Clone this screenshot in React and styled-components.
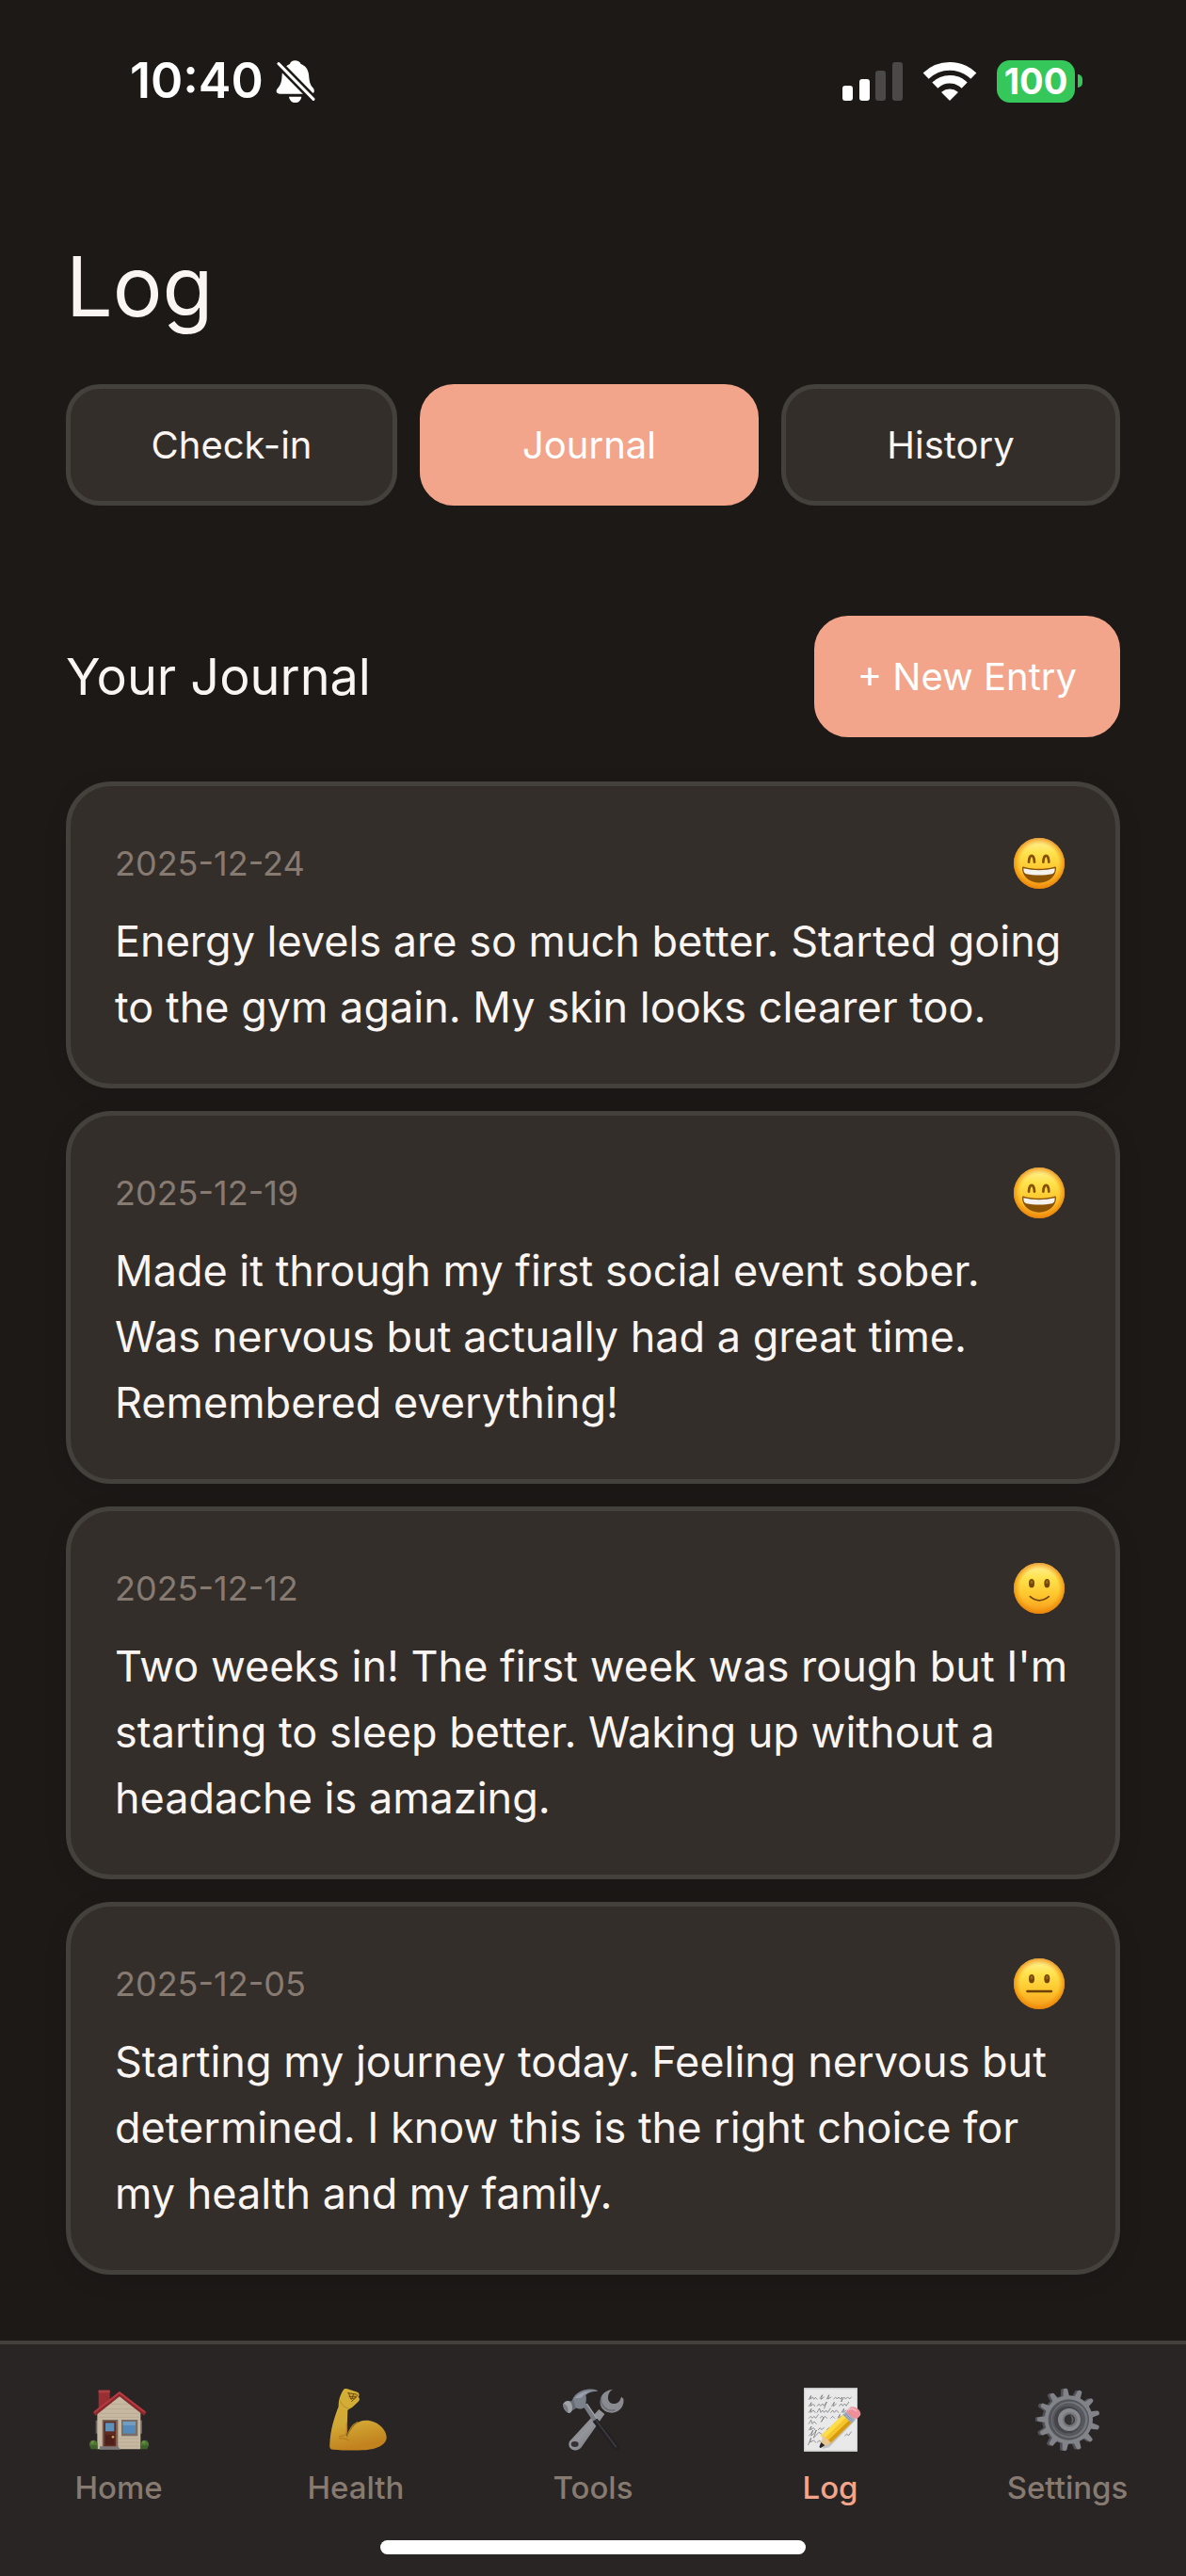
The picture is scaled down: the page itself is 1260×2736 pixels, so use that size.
import React, { useState } from "react";
import styled, { createGlobalStyle, ThemeProvider } from "styled-components";

const theme = {
  bg: "#1c1917",
  card: "#332e2a",
  border: "#44403c",
  nav: "#292524",
  accent: "#f2a58a",
  text_primary: "#faf5f2",
  text_secondary: "#877b71",
};

const GlobalStyle = createGlobalStyle`
  * {
    box-sizing: border-box;
  }
  body {
    margin: 0;
    background: #1c1917;
    font-family: Inter, "Liberation Sans", sans-serif;
  }
  button {
    font-family: inherit;
    cursor: pointer;
  }
`;

const Page = styled.div`
  min-height: 100vh;
  display: flex;
  flex-direction: column;
  background: ${({ theme }) => theme.bg};
  color: ${({ theme }) => theme.text_primary};
`;

const StatusBar = styled.header`
  height: 172px;
  padding: 0 110px 0 138px;
  display: flex;
  align-items: center;
  justify-content: space-between;
  color: #fff;
`;

const StatusGroup = styled.div`
  display: flex;
  align-items: center;
  gap: ${({ $gap }) => $gap}px;
`;

const Time = styled.span`
  font-size: 52px;
  line-height: 60px;
  font-weight: 600;
`;

const Battery = styled.div`
  display: flex;
  align-items: center;
  gap: 3px;
`;

const BatteryLevel = styled.div`
  width: 83px;
  height: 45px;
  border-radius: 14px;
  display: flex;
  align-items: center;
  justify-content: center;
  background: #35c759;
  font-size: 38px;
  line-height: 45px;
  font-weight: 700;
`;

const BatteryTip = styled.div`
  width: 5px;
  height: 14px;
  border-radius: 0 7px 7px 0;
  background: #35c759;
`;

const Main = styled.main`
  flex: 1;
  padding: 76px 70px 68px;
  display: flex;
  flex-direction: column;
`;

const Title = styled.h1`
  margin: 0 0 48px;
  font-size: 88px;
  line-height: 112px;
  font-weight: 400;
`;

const Tabs = styled.div`
  display: grid;
  grid-template-columns: 352fr 360fr 360fr;
  gap: 24px;
  margin-bottom: 117px;
`;

const Button = styled.button`
  height: 129px;
  padding: 0 41px;
  font-size: 40px;
  line-height: 48px;
  font-weight: 400;
  border-radius: 36px;
  border: 5px solid
    ${({ theme, $filled }) => ($filled ? theme.accent : theme.border)};
  background: ${({ theme, $filled }) => ($filled ? theme.accent : theme.card)};
  color: ${({ theme, $filled }) => ($filled ? "#fff" : theme.text_primary)};
`;

const SectionHeader = styled.div`
  display: flex;
  align-items: center;
  justify-content: space-between;
  margin-bottom: 47px;
`;

const SectionTitle = styled.h2`
  margin: 0;
  font-size: 54px;
  line-height: 72px;
  font-weight: 400;
`;

const EntryList = styled.div`
  display: flex;
  flex-direction: column;
  gap: 24px;
`;

const EntryCard = styled.article`
  padding: 48px 48px 46px 47px;
  border: 5px solid ${({ theme }) => theme.border};
  border-radius: 48px;
  background: ${({ theme }) => theme.card};
  box-shadow: 0 6px 24px rgba(0, 0, 0, 0.1);
`;

const EntryTop = styled.div`
  height: 68px;
  margin-bottom: 14px;
  display: flex;
  align-items: center;
  justify-content: space-between;
`;

const EntryDate = styled.time`
  font-size: 36px;
  line-height: 44px;
  color: ${({ theme }) => theme.text_secondary};
`;

const EntryText = styled.p`
  margin: 0;
  font-size: 45px;
  line-height: 70px;
`;

const BottomBar = styled.footer`
  padding: 46px 0 23px;
  display: flex;
  flex-direction: column;
  align-items: center;
  gap: 36px;
  border-top: 4px solid ${({ theme }) => theme.border};
  background: ${({ theme }) => theme.nav};
`;

const Nav = styled.nav`
  width: 100%;
  display: grid;
  grid-template-columns: repeat(5, 1fr);
`;

const NavItem = styled.a`
  display: flex;
  flex-direction: column;
  align-items: center;
  gap: 18px;
  text-decoration: none;
  font-size: 33px;
  line-height: 40px;
  font-weight: 500;
  color: ${({ theme, $active }) =>
    $active ? theme.accent : theme.text_secondary};
  svg {
    opacity: ${({ $active }) => ($active ? 1 : 0.8)};
  }
`;

const HomeIndicator = styled.div`
  width: 452px;
  height: 15px;
  border-radius: 8px;
  background: #fff;
`;

const BellOff = () => (
  <svg width="42" height="46" viewBox="0 0 126 138" aria-hidden="true">
    <path
      d="M61 4c9 0 16 4 19 11 14 5 23 17 25 33 2 20 3 32 13 42 8 9 5 20-6 20H12C1 110-1 100 6 92c12-12 13-26 14-44 2-16 11-28 25-33 2-7 8-11 16-11z"
      fill="#fff"
    />
    <path d="M42 119h40c-2 12-10 19-20 19s-18-7-20-19z" fill="#fff" />
    <path d="M2 7l126 128" stroke="#1c1917" strokeWidth="25" />
    <path
      d="M9 14l111 113"
      stroke="#fff"
      strokeWidth="9"
      strokeLinecap="round"
    />
  </svg>
);

const Signal = () => (
  <svg width="64" height="41" viewBox="0 0 64 41" aria-hidden="true">
    <rect x="0" y="25" width="11" height="16" rx="3" fill="#fff" />
    <rect x="18" y="18" width="11" height="23" rx="3" fill="#fff" />
    <rect x="35" y="9" width="11" height="32" rx="3" fill="#4b4947" />
    <rect x="53" y="0" width="11" height="41" rx="3" fill="#4b4947" />
  </svg>
);

const Wifi = () => (
  <svg width="60" height="44" viewBox="0 0 180 132" aria-hidden="true">
    <g fill="none" stroke="#fff" strokeWidth="26">
      <path d="M14 50A109 109 0 0 1 166 50" />
      <path d="M43 80A67 67 0 0 1 137 80" />
    </g>
    <path
      d="M90 126L66 102A37 37 0 0 1 114 102Z"
      fill="#fff"
      stroke="#fff"
      strokeWidth="4"
      strokeLinejoin="round"
    />
  </svg>
);

const Face = ({ mood }) => (
  <svg width="66" height="66" viewBox="0 0 198 198" role="img" aria-label={mood}>
    <defs>
      <linearGradient id={`skin-${mood}`} x1="0" y1="0" x2="0" y2="1">
        <stop offset="0" stopColor="#fff3a0" />
        <stop offset="0.3" stopColor="#ffe24c" />
        <stop offset="0.65" stopColor="#fec42c" />
        <stop offset="1" stopColor="#f5981b" />
      </linearGradient>
      <radialGradient id={`edge-${mood}`}>
        <stop offset="0.75" stopColor="#f08a00" stopOpacity="0" />
        <stop offset="1" stopColor="#e87d05" stopOpacity="0.75" />
      </radialGradient>
    </defs>
    <circle cx="99" cy="99" r="81" fill={`url(#skin-${mood})`} />
    <circle cx="99" cy="99" r="81" fill={`url(#edge-${mood})`} />
    {mood === "great" ? (
      <>
        <g fill="none" stroke="#855000" strokeWidth="8" strokeLinecap="round">
          <path d="M66 95C67 68 83 68 84 95" />
          <path d="M112 95C113 68 129 68 130 95" />
        </g>
        <path
          d="M45 112c-2 27 22 49 54 49s56-22 54-49c-1-3-4-3-6-2-30 8-66 8-96 0-3-1-5 0-6 2z"
          fill="#8b5305"
        />
        <path
          d="M49 115c32 8 68 8 100 0 0 11-3 16-9 18-24 5-58 5-82 0-6-2-9-7-9-18z"
          fill="#f4f2ef"
        />
      </>
    ) : (
      <>
        <g fill="#744707">
          <ellipse cx="75" cy="83" rx="9" ry="14" />
          <ellipse cx="124" cy="83" rx="9" ry="14" />
        </g>
        <g fill="#9c6a16">
          <ellipse cx="75" cy="79" rx="4" ry="6" />
          <ellipse cx="124" cy="79" rx="4" ry="6" />
        </g>
        <path
          d={mood === "good" ? "M70 125Q99 150 130 125" : "M61 123H138"}
          fill="none"
          stroke="#6d4209"
          strokeWidth={mood === "good" ? 5 : 7}
          strokeLinecap="round"
        />
      </>
    )}
  </svg>
);

const HomeIcon = () => (
  <svg width="68" height="68" viewBox="0 0 204 204" aria-hidden="true">
    <path d="M38 8h36v30L38 66z" fill="#b53237" />
    <path d="M38 8h36v8H38z" fill="#cf474b" />
    <path d="M29 104h8v42h-8zM170 104h7v42h-7z" fill="#777272" />
    <path d="M34 74L105 20l67 54v122H34z" fill="#efdfc1" />
    <path
      d="M72 52h66M54 68h100M38 82h130M38 94h130M102 162h66M102 174h66M102 186h66"
      stroke="#d5c5a7"
      strokeWidth="2"
    />
    <path
      d="M24 84L105 20l82 64"
      fill="none"
      stroke="#a02a31"
      strokeWidth="13"
    />
    <path
      d="M25 78L105 16l81 62"
      fill="none"
      stroke="#dc4048"
      strokeWidth="6"
    />
    <path d="M50 102h50v88H50z" fill="#8b7567" />
    <path d="M55 107h38v82H55z" fill="#6f2b20" />
    <path d="M60 112h28v27H60z" fill="#6caee0" />
    <path d="M60 150h28v32H60z" fill="#592018" />
    <circle cx="84" cy="157" r="4" fill="#f0c36a" />
    <path d="M111 102h52v52h-52z" fill="#8d8178" />
    <path d="M116 108h40v38h-40z" fill="#5fa4df" />
    <path d="M116 108h40v12h-40z" fill="#83bbe8" />
    <path d="M42 187h58l8 10H42z" fill="#8f8c8b" />
    <circle cx="22" cy="180" r="13" fill="#568a32" />
    <circle cx="185" cy="180" r="13" fill="#568a32" />
    <path d="M9 184h26v12H14zM172 184h26l-5 12h-21z" fill="#42712c" />
    <circle cx="19" cy="174" r="5" fill="#76a64c" />
    <circle cx="182" cy="174" r="5" fill="#76a64c" />
  </svg>
);

const HealthIcon = () => (
  <svg width="68" height="68" viewBox="0 0 204 204" aria-hidden="true">
    <defs>
      <linearGradient id="arm" x1="0" y1="0" x2="0.2" y2="1">
        <stop offset="0" stopColor="#ffd43a" />
        <stop offset="0.6" stopColor="#fcc93a" />
        <stop offset="1" stopColor="#e99a1d" />
      </linearGradient>
    </defs>
    <path
      d="M63 6c4-5 12-3 17-1l27 9c7 3 7 11 3 15 5 5 5 11 0 15L91 62c-5 4-11 5-15 10-1 31-2 56-3 85 13-30 32-53 62-53 36 0 65 29 65 54 0 25-34 39-76 41-35 2-68 0-96-2-9-1-10-7-9-17 2-47 14-83 28-120-1-21 7-41 16-54z"
      fill="url(#arm)"
    />
    <path
      d="M50 155c18-2 26 2 23-40M74 158c5-20 17-40 34-48M50 161c13 0 22 2 31 7"
      fill="none"
      stroke="#d7931f"
      strokeWidth="4"
      strokeLinecap="round"
    />
    <path
      d="M77 17l26 4c5 1 5 7 0 7H81M80 18l6 18 15-4M94 22l-5 14M104 30l-15 13"
      fill="none"
      stroke="#825008"
      strokeWidth="3"
      strokeLinecap="round"
    />
    <path
      d="M53 42c4 14 13 20 25 24"
      fill="none"
      stroke="#dda02a"
      strokeWidth="3"
    />
  </svg>
);

const ToolsIcon = () => (
  <svg width="68" height="68" viewBox="0 0 204 204" aria-hidden="true">
    <defs>
      <linearGradient id="steel" x1="0" y1="0" x2="1" y2="1">
        <stop offset="0" stopColor="#8b9099" />
        <stop offset="0.5" stopColor="#aeb1b8" />
        <stop offset="1" stopColor="#74767e" />
      </linearGradient>
    </defs>
    <path
      d="M121 69l18 15-74 106c-7 10-23 13-33 4-10-8-9-20 0-28z"
      fill="url(#steel)"
    />
    <path
      d="M165 6c-9 4-14 12-15 24-1 14 9 22 22 21 11-2 17-10 20-22l7 6c4 24-13 44-36 45-24 1-41-17-38-39 2-20 18-34 40-35z"
      fill="#a2a5ad"
    />
    <path
      d="M128 30c-4 26 17 48 44 41"
      fill="none"
      stroke="#777b84"
      strokeWidth="4"
    />
    <ellipse cx="44" cy="180" rx="12" ry="9" fill="#38343a" />
    <path d="M68 55l15-5 34 51-13 9z" fill="#8d929b" />
    <path d="M82 51l34 50" stroke="#c2c5cc" strokeWidth="4" />
    <path
      d="M101 108l14-10 69 83c6 8 4 15-2 18-6 3-13-1-17-7z"
      fill="#222124"
    />
    <path
      d="M112 104l63 84"
      stroke="#404044"
      strokeWidth="5"
      strokeLinecap="round"
    />
    <path
      d="M37 37c5-15 24-29 47-32 12-1 23 0 32 4v3c-18 0-30 4-37 12 3 10 1 24-3 38-10 7-21 7-31 2-8-4-13-14-8-27z"
      fill="#8f98a5"
    />
    <path
      d="M43 34c13-16 31-23 58-25-19 6-30 13-36 23z"
      fill="#b7c0ce"
    />
    <path d="M24 45l16-6 7 27-14 9z" fill="#777d87" />
    <path
      d="M7 51c5-7 12-11 20-8 8 7 11 17 8 30-3 8-10 10-15 5C10 72 6 63 7 51z"
      fill="#bfc3ca"
    />
    <path d="M7 51c8 0 19 12 15 29C11 73 6 62 7 51z" fill="#8e949e" />
  </svg>
);

const LogIcon = () => (
  <svg width="68" height="68" viewBox="0 0 204 204" aria-hidden="true">
    <path d="M18 1h171v202H18z" fill="#e9e9ea" />
    <path
      d="M20 3h167v198H20z"
      fill="none"
      stroke="#cdcdcf"
      strokeWidth="3"
    />
    <g
      fill="none"
      stroke="#66666a"
      strokeWidth="2"
      strokeLinecap="round"
      strokeLinejoin="round"
    >
      <path d="M34 37l7-12-3 12 8-7 4 7 5-6 5 6M69 35l8-12-4 14 9-7M91 36l7-13-3 13 10-6M113 36l6-6 5 6 5-6 5 6 6-6-3 15 9-15 5 6 7-6 6 6 5-6" />
      <path d="M34 59l8-12-3 12 9-7 5 7M61 58l5-6 5 6 7-7 4 7 9-13-8 21M107 59l8-13-3 13 9-7M131 58l6-7 5 7 6-7 5 7 8-12M34 79l8-12-3 12 10-7 5 7M60 79l8-13 4 13 6-7 5 7 6-7 5 7 9-13M104 79l6-7 5 7 6-7 8 7M138 79l8-12-3 12 10-7" />
      <path d="M34 97l6-6 5 6 6-6 5 6 8-11M70 96l6-5 5 5-8 13 12-18 7 6M104 97l6-6 6 6M126 97l7-12-2 12 9-7M34 115l7-12 4 12 6-7 7 7M34 135l8-12-3 12 10-7 5 7M64 134l6-6 5 6 7-7M91 134l6-6 8 6M34 153l8-8 5-9-6 17 10-7 7-11-9 25 17-18 9 6" />
      <path d="M32 182l9-22-3 14 11-6 7 6M61 174l7-6 6 7M149 153l6-6 5 6 9-12" />
    </g>
    <path d="M150 77l34 25L99 190l-23 5z" fill="#000" opacity="0.16" />
    <path d="M143 86l27 26-70 68-28-27z" fill="#f6c52b" />
    <path d="M143 86l9 9-70 68-10-10z" fill="#ffdc4a" />
    <path d="M162 104l8 8-70 68-9-8z" fill="#d79b12" />
    <path d="M80 151l25 25-30 13-5-5z" fill="#ebc790" />
    <path d="M73 174l12 10-12 7c-4 2-6-1-5-5z" fill="#29272a" />
    <path d="M154 75l28 25-12 13-28-27z" fill="#a5b0c1" />
    <path d="M149 81l27 25M145 85l27 25" stroke="#78859a" strokeWidth="2" />
    <path
      d="M154 75l9-10c5-6 17-6 26 2 10 8 13 18 7 24l-9 9c-12-3-26-12-33-25z"
      fill="#ee8f9a"
    />
    <path
      d="M160 71c6-7 17-4 25 3"
      fill="none"
      stroke="#f8b6bd"
      strokeWidth="5"
      strokeLinecap="round"
    />
  </svg>
);

const teeth = Array.from({ length: 13 }, (_, i) => (i * 360) / 13 - 6);

const SettingsIcon = () => (
  <svg width="68" height="68" viewBox="0 0 204 204" aria-hidden="true">
    {["#5b5d64", "#979ba3"].map((fill, layer) => (
      <g key={fill} fill={fill} transform={`translate(${layer * 8} 0)`}>
        <circle cx="98" cy="102" r="77" />
        {teeth.map((angle) => (
          <path
            key={angle}
            d="M88 30l3-24q1-4 7-4t7 4l3 24z"
            transform={`rotate(${angle} 98 102)`}
          />
        ))}
      </g>
    ))}
    <circle cx="106" cy="102" r="65" fill="#5f636b" />
    <circle cx="109" cy="102" r="58" fill="#868a92" />
    <circle cx="106" cy="102" r="53" fill="#62656d" />
    <circle cx="103" cy="102" r="43" fill="#4c4d53" />
    <circle cx="108" cy="102" r="36" fill="#a1a4aa" />
    <circle cx="110" cy="102" r="24" fill="#888b92" />
    <circle cx="109" cy="102" r="17" fill="#393639" />
    <path d="M112 87c12 5 14 22 2 30 3-11 3-20-2-30z" fill="#757378" />
  </svg>
);

const tabs = ["Check-in", "Journal", "History"];

const entries = [
  {
    date: "2025-12-24",
    mood: "great",
    text: "Energy levels are so much better. Started going to the gym again. My skin looks clearer too.",
  },
  {
    date: "2025-12-19",
    mood: "great",
    text: "Made it through my first social event sober. Was nervous but actually had a great time. Remembered everything!",
  },
  {
    date: "2025-12-12",
    mood: "good",
    text: "Two weeks in! The first week was rough but I'm starting to sleep better. Waking up without a headache is amazing.",
  },
  {
    date: "2025-12-05",
    mood: "neutral",
    text: "Starting my journey today. Feeling nervous but determined. I know this is the right choice for my health and my family.",
  },
];

const navItems = [
  { label: "Home", Icon: HomeIcon },
  { label: "Health", Icon: HealthIcon },
  { label: "Tools", Icon: ToolsIcon },
  { label: "Log", Icon: LogIcon },
  { label: "Settings", Icon: SettingsIcon },
];

const App = () => {
  const [tab, setTab] = useState("Journal");

  return (
    <ThemeProvider theme={theme}>
      <GlobalStyle />
      <Page>
        <StatusBar>
          <StatusGroup $gap={13}>
            <Time>10:40</Time>
            <BellOff />
          </StatusGroup>
          <StatusGroup $gap={20}>
            <Signal />
            <Wifi />
            <Battery>
              <BatteryLevel>100</BatteryLevel>
              <BatteryTip />
            </Battery>
          </StatusGroup>
        </StatusBar>
        <Main>
          <Title>Log</Title>
          <Tabs>
            {tabs.map((name) => (
              <Button
                key={name}
                type="button"
                $filled={tab === name}
                aria-pressed={tab === name}
                onClick={() => setTab(name)}
              >
                {name}
              </Button>
            ))}
          </Tabs>
          <SectionHeader>
            <SectionTitle>Your Journal</SectionTitle>
            <Button type="button" $filled>
              + New Entry
            </Button>
          </SectionHeader>
          <EntryList>
            {entries.map((entry) => (
              <EntryCard key={entry.date}>
                <EntryTop>
                  <EntryDate dateTime={entry.date}>{entry.date}</EntryDate>
                  <Face mood={entry.mood} />
                </EntryTop>
                <EntryText>{entry.text}</EntryText>
              </EntryCard>
            ))}
          </EntryList>
        </Main>
        <BottomBar>
          <Nav>
            {navItems.map(({ label, Icon }) => (
              <NavItem
                key={label}
                href={`#${label.toLowerCase()}`}
                $active={label === "Log"}
              >
                <Icon />
                {label}
              </NavItem>
            ))}
          </Nav>
          <HomeIndicator />
        </BottomBar>
      </Page>
    </ThemeProvider>
  );
};

export default App;
